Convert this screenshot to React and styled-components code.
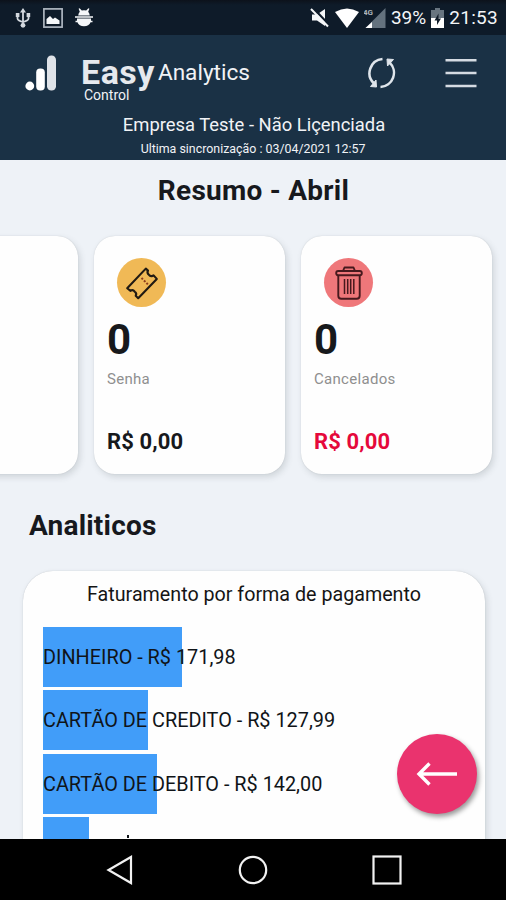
import React from "react";
import styled, { createGlobalStyle } from "styled-components";

const GlobalStyle = createGlobalStyle`
  body {
    margin: 0;
    font-family: Roboto, sans-serif;
  }

  * {
    box-sizing: border-box;
  }
`

const Screen = styled.div`
  position: relative;
  width: 506px;
  height: 900px;
  display: flex;
  flex-direction: column;
  overflow: hidden;
  background: #eef2f7;
`

const StatusBar = styled.div`
  height: 35px;
  flex: none;
  display: flex;
  align-items: center;
  justify-content: space-between;
  padding: 0 8px 0 15px;
  background: linear-gradient(#0c121b, #0e1b29 5px);
  color: #f4f6f8;
`

const StatusGroup = styled.div`
  display: flex;
  align-items: center;
  gap: ${(props) => props.$gap}px;
`

const StatusText = styled.span`
  font-size: 19px;
  line-height: 22px;
  padding-top: 1px;
  letter-spacing: ${(props) => props.$spacing || 0}px;
`

const Header = styled.header`
  height: 125px;
  flex: none;
  background: #1a3145;
  color: #f1f3f6;
`

const TopRow = styled.div`
  height: 77px;
  display: flex;
  align-items: flex-start;
  padding: 0 29px 0 25px;
`

const LogoIcon = styled.svg`
  margin-top: 20px;
  flex: none;
`

const Brand = styled.div`
  flex: 1;
  padding: 21px 0 0 24px;
`

const BrandLine = styled.div`
  display: flex;
  height: 32px;
`

const Easy = styled.span`
  font-size: 34px;
  font-weight: 700;
  line-height: 32px;
  letter-spacing: 0.5px;
  color: #e6e9ee;
`

const Analytics = styled.span`
  margin-left: 3px;
  font-size: 22.6px;
  line-height: 33px;
`

const Control = styled.div`
  padding-left: 3px;
  font-size: 14px;
  line-height: 15px;
`

const HeaderIcon = styled.svg`
  margin-top: 22px;
  margin-left: ${(props) => props.$left || 0}px;
  flex: none;
`

const Company = styled.div`
  text-align: center;
  font-size: 18.4px;
  line-height: 25px;
  padding-left: 2px;
`

const LastSync = styled.div`
  text-align: center;
  font-size: 12.4px;
  line-height: 24px;
`

const Content = styled.main`
  height: 680px;
  flex: none;
  overflow: hidden;
`

const Title = styled.h1`
  margin: 0;
  height: 76px;
  padding-left: 1px;
  font-size: 28px;
  font-weight: 700;
  line-height: 61px;
  letter-spacing: 0.25px;
  text-align: center;
  color: #17191d;
`

const Carousel = styled.div`
  height: 265px;
  display: flex;
  justify-content: flex-end;
  gap: 16px;
  padding-right: 14px;
`

const Card = styled.div`
  width: 191px;
  height: 238px;
  flex: none;
  padding: 22px 13px;
  border-radius: 21px;
  background: #fefefe;
  box-shadow: 2px 3px 6px rgba(60, 70, 80, 0.17), 0 0 1px rgba(60, 70, 80, 0.25);
`

const Badge = styled.div`
  width: 49px;
  height: 49px;
  margin-left: 10px;
  display: flex;
  align-items: center;
  justify-content: center;
  border-radius: 50%;
  background: ${(props) => props.$color};
`

const Count = styled.div`
  margin-top: 7px;
  font-size: 42px;
  font-weight: 700;
  line-height: 52px;
  color: #17191c;
`

const CardLabel = styled.div`
  font-size: 15px;
  line-height: 26px;
  letter-spacing: 0.3px;
  color: #8f8f8f;
`

const Amount = styled.div`
  margin-top: 37px;
  font-size: 22px;
  font-weight: 700;
  line-height: 26px;
  letter-spacing: 0.1px;
  color: ${(props) => props.$color || "#17191c"};
`

const SectionTitle = styled.h2`
  margin: 0;
  height: 70px;
  padding-left: 29px;
  font-size: 28px;
  font-weight: 700;
  line-height: 50px;
  letter-spacing: 0.2px;
  color: #17191d;
`

const ChartCard = styled.section`
  width: 462px;
  height: 360px;
  margin-left: 23px;
  padding: 0 20px;
  border-radius: 30px;
  background: #fefefe;
  box-shadow: 2px 3px 6px rgba(60, 70, 80, 0.17), 0 0 1px rgba(60, 70, 80, 0.3);
`

const ChartTitle = styled.div`
  height: 56px;
  text-align: center;
  font-size: 19.7px;
  line-height: 47px;
  color: #151515;
`

const BarRow = styled.div`
  height: 60px;
  margin-bottom: 3.3px;
  display: flex;
  align-items: center;
  background: linear-gradient(#419df9, #419df9) no-repeat;
  background-size: ${(props) => props.$width}px 100%;
  font-size: 19.85px;
  line-height: 24px;
  padding-top: 2px;
  white-space: nowrap;
  color: #101418;
`

// top of the accent that peeks over the navigation bar
const AccentTip = styled.span`
  width: 2px;
  height: 3px;
  margin-left: 84px;
  margin-bottom: 22px;
  background: #101418;
`

const BackButton = styled.button`
  position: absolute;
  left: 397px;
  top: 734px;
  width: 80px;
  height: 80px;
  padding: 0;
  border: none;
  border-radius: 50%;
  background: #ea336e;
  box-shadow: 2px 3px 5px rgba(0, 0, 0, 0.4);
`

const NavBar = styled.nav`
  height: 61px;
  margin-top: -1px;
  flex: none;
  display: flex;
  align-items: center;
  justify-content: space-between;
  padding: 0 104px 0 106px;
  background: #000;
`

const bars = [
  { label: "DINHEIRO - R$ 171,98", width: 139 },
  { label: "CARTÃO DE CREDITO - R$ 127,99", width: 105 },
  { label: "CARTÃO DE DEBITO - R$ 142,00", width: 114 },
  { label: "", width: 46 },
]

const UsbIcon = () => (
  <svg width="16" height="20" viewBox="0 0 16 20" fill="none" stroke="#d3d8de" strokeWidth="1.8">
    <path d="M8 3v14M2.5 7v3.5q0 2 5.5 3.5M13.5 7v3.5q0 2-5.5 3.5" />
    <path d="M8 0l3 4.5H5zM.8 5h3.6v4H.8zM11.6 5h3.6v4h-3.6z" fill="#d3d8de" stroke="none" />
    <circle cx="8" cy="17.3" r="2.4" fill="#d3d8de" stroke="none" />
  </svg>
)

const PhotoIcon = () => (
  <svg width="20" height="20" viewBox="0 0 20 20">
    <rect x=".9" y=".9" width="18.2" height="18.2" fill="none" stroke="#aeb6c0" strokeWidth="1.7" />
    <path d="M3.5 16v-5l3.5-3 3 3 2-1.5 4.5 3V16z" fill="#f5f7f9" />
  </svg>
)

const DebugIcon = () => (
  <svg width="18" height="20" viewBox="0 0 18 20" fill="#f5f7f9">
    <path d="M3.2 7.4a5.8 5.8 0 0 1 1.6-3.6L3.6.8l1-.6 2.2 2.4a6 6 0 0 1 4.4 0L13.4.2l1 .6-1.2 3a5.8 5.8 0 0 1 1.6 3.6z" />
    <path d="M0 8.2h18v1.5H0zM2 10.5h14v2.2h1.500v1.600h-1.900a7 6 0 0 1-13.200 0H.500v-1.600H2z" />
  </svg>
)

const MutedIcon = () => (
  <svg width="20" height="20" viewBox="0 0 20 20">
    <path d="M2 6.5h5L15 1v17l-8-5.5H2z" fill="#f5f7f9" />
    <path d="M3 0l17 18" stroke="#0e1b29" strokeWidth="2.5" />
    <path d="M1 1l17 17.5" stroke="#f5f7f9" strokeWidth="2" />
  </svg>
)

const WifiIcon = () => (
  <svg width="24" height="20" viewBox="0 0 24 20">
    <path d="M0 4Q12-3 24 4L12 20z" fill="#fff" />
  </svg>
)

const SignalIcon = () => (
  <svg width="22" height="20" viewBox="0 0 22 20">
    <path d="M21.5 0v20H1.5z" fill="#64727e" />
    <path d="M8 14v6H1.5z" fill="#fff" />
    <text x="-1" y="7" fontSize="8" fontWeight="700" fontFamily="Roboto" fill="#aab3bc">4G</text>
  </svg>
)

const BatteryIcon = () => (
  <svg width="13" height="20" viewBox="0 0 13 20">
    <path d="M4 0h5v2h4v9H0V2h4z" fill="#687580" />
    <path d="M0 10h13v10H0z" fill="#fff" />
    <path d="M7.5 5.500l-4 7h2.500V17l4-6.500h-2.500z" fill="#101c29" />
  </svg>
)

const TicketIcon = () => (
  <svg width="34" height="34" viewBox="0 0 34 34" fill="none" stroke="#211a12" strokeWidth="2.1" strokeLinejoin="round">
    <path d="M2.2 22.2 20.8 2.6l2.2 2a3.2 3.2 0 0 0 1 4.2 3.2 3.2 0 0 0 4.6.6l3.2 3.5L13.2 32.2l-2.5-2.4a3.2 3.2 0 0 0-1-4.2 3.2 3.2 0 0 0-4.4-.8z" />
    <path d="M16.5 12l6.5 6.5" stroke="#8b3c1c" strokeWidth="2" strokeDasharray="2 1.5" />
  </svg>
)

const TrashIcon = () => (
  <svg width="28" height="34" viewBox="0 0 28 34" fill="none" stroke="#47191d" strokeWidth="1.9" strokeLinejoin="round">
    <path d="M8 5l1.5-3.5h9L20 5" />
    <rect x="1.2" y="5" width="25.6" height="4.3" rx="2" />
    <path d="M3.3 9.5v20.3q0 3 3 3h15.4q3 0 3-3V9.5" />
    <path d="M9.5 13v15M12.7 13v15M15.7 13v15M18.8 13v15" strokeWidth="1.5" />
  </svg>
)

const SummaryCard = ({ color, icon, label, amountColor }) => (
  <Card>
    <Badge $color={color}>{icon}</Badge>
    <Count>0</Count>
    <CardLabel>{label}</CardLabel>
    <Amount $color={amountColor}>R$ 0,00</Amount>
  </Card>
)

const App = () => {
  return (
    <Screen>
      <GlobalStyle />
      <StatusBar>
        <StatusGroup $gap={12}>
          <UsbIcon />
          <PhotoIcon />
          <DebugIcon />
        </StatusGroup>
        <StatusGroup $gap={5}>
          <MutedIcon />
          <WifiIcon />
          <SignalIcon />
          <StatusText>39%</StatusText>
          <BatteryIcon />
          <StatusText $spacing={0.3}>21:53</StatusText>
        </StatusGroup>
      </StatusBar>

      <Header>
        <TopRow>
          <LogoIcon width="32" height="36" viewBox="0 0 32 36">
            <circle cx="4.8" cy="31" r="4.4" fill="#fff" />
            <rect x="11.2" y="13.5" width="8.6" height="22" rx="4" fill="#fff" />
            <rect x="22" y=".5" width="9" height="35" rx="4.3" fill="#dfe3e8" />
          </LogoIcon>
          <Brand>
            <BrandLine>
              <Easy>Easy</Easy>
              <Analytics>Analytics</Analytics>
            </BrandLine>
            <Control>Control</Control>
          </Brand>
          <HeaderIcon width="32" height="32" viewBox="0 0 32 32" fill="none" stroke="#dfe5eb" strokeWidth="2.5">
            <path d="M16.5 2A14.200 14.200 0 0 0 8 26.500M14.500 30A14.200 14.200 0 0 0 23.500 5.500" />
            <path d="M4.500 29.500l6 .5-.5-7zM27.500 2.500l-6.500-.5.5 7z" fill="#dfe5eb" strokeWidth="1" />
          </HeaderIcon>
          <HeaderIcon $left={47} width="32" height="32" viewBox="0 0 32 32" stroke="#d5dbe2" strokeWidth="2.4">
            <path d="M.5 3.2h31M.5 16h31M.5 29h31" />
          </HeaderIcon>
        </TopRow>
        <Company>Empresa Teste - Não Liçenciada</Company>
        <LastSync>Ultima sincronização : 03/04/2021 12:57</LastSync>
      </Header>

      <Content>
        <Title>Resumo - Abril</Title>
        <Carousel>
          <Card />
          <SummaryCard color="#f0b956" icon={<TicketIcon />} label="Senha" />
          <SummaryCard color="#ef777a" icon={<TrashIcon />} label="Cancelados" amountColor="#e5093b" />
        </Carousel>
        <SectionTitle>Analiticos</SectionTitle>
        <ChartCard>
          <ChartTitle>Faturamento por forma de pagamento</ChartTitle>
          {bars.map((bar) => (
            <BarRow key={bar.width} $width={bar.width}>
              {bar.label || <AccentTip />}
            </BarRow>
          ))}
        </ChartCard>
      </Content>

      <BackButton aria-label="Voltar">
        <svg width="80" height="80" viewBox="0 0 80 80" fill="none" stroke="#fff" strokeWidth="3.4">
          <path d="M60 40H22M32.5 29.5 22 40l10.5 10.5" />
        </svg>
      </BackButton>

      <NavBar>
        <svg width="28" height="30" viewBox="0 0 28 30" fill="none" stroke="#f2f2f2" strokeWidth="2.2">
          <path d="M25 2v26L2.5 15z" />
        </svg>
        <svg width="30" height="30" viewBox="0 0 30 30" fill="none" stroke="#f2f2f2" strokeWidth="2.2">
          <circle cx="15" cy="15" r="13.2" />
        </svg>
        <svg width="30" height="30" viewBox="0 0 30 30" fill="none" stroke="#f2f2f2" strokeWidth="2.2">
          <rect x="1.5" y="1.5" width="27" height="27" />
        </svg>
      </NavBar>
    </Screen>
  )
}

export default App
